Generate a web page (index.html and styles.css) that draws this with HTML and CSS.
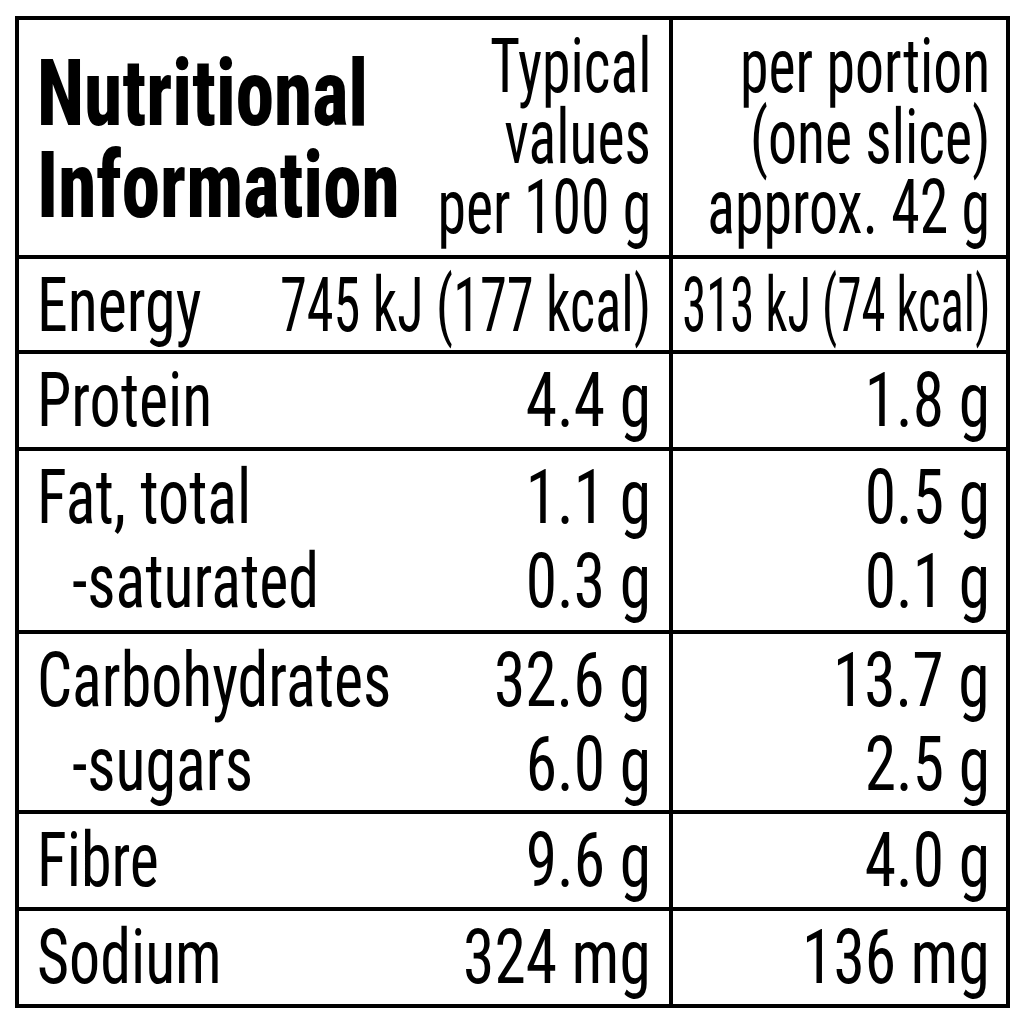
FILE: index.html
```html
<!DOCTYPE html>
<html lang="en">
<head>
<meta charset="utf-8">
<title>Nutritional Information</title>
<link rel="stylesheet" href="styles.css">
</head>
<body>
<div class="panel">
  <div class="row row-head">
    <div class="main">
      <div class="title">
        <div class="ln"><span class="s sl">Nutritional</span></div>
        <div class="ln"><span class="s sl">Information</span></div>
      </div>
      <div class="sub">
        <div class="ln"><span class="s sr">Typical</span></div>
        <div class="ln"><span class="s sr">values</span></div>
        <div class="ln"><span class="s sr">per 100 g</span></div>
      </div>
    </div>
    <div class="per sub">
      <div class="ln"><span class="s sr">per portion</span></div>
      <div class="ln"><span class="s sr">(one slice)</span></div>
      <div class="ln"><span class="s sr">approx. 42 g</span></div>
    </div>
  </div>

  <div class="row row-energy">
    <div class="main body">
      <div class="labels"><div class="ln"><span class="s sl">Energy</span></div></div>
      <div class="vals"><div class="ln"><span class="s sv e1">745 kJ (177 kcal)</span></div></div>
    </div>
    <div class="per body">
      <div class="ln"><span class="s sv e2">313 kJ (74 kcal)</span></div>
    </div>
  </div>

  <div class="row row-one">
    <div class="main body">
      <div class="labels"><div class="ln"><span class="s sl">Protein</span></div></div>
      <div class="vals"><div class="ln"><span class="s sv">4.4 g</span></div></div>
    </div>
    <div class="per body">
      <div class="ln"><span class="s sv">1.8 g</span></div>
    </div>
  </div>

  <div class="row row-fat">
    <div class="main body">
      <div class="labels">
        <div class="ln"><span class="s sl">Fat, total</span></div>
        <div class="ln sub-item"><span class="s sl">-saturated</span></div>
      </div>
      <div class="vals">
        <div class="ln"><span class="s sv">1.1 g</span></div>
        <div class="ln"><span class="s sv">0.3 g</span></div>
      </div>
    </div>
    <div class="per body">
      <div class="ln"><span class="s sv">0.5 g</span></div>
      <div class="ln"><span class="s sv">0.1 g</span></div>
    </div>
  </div>

  <div class="row row-carb">
    <div class="main body">
      <div class="labels">
        <div class="ln"><span class="s sl">Carbohydrates</span></div>
        <div class="ln sub-item"><span class="s sl">-sugars</span></div>
      </div>
      <div class="vals">
        <div class="ln"><span class="s sv">32.6 g</span></div>
        <div class="ln"><span class="s sv">6.0 g</span></div>
      </div>
    </div>
    <div class="per body">
      <div class="ln"><span class="s sv">13.7 g</span></div>
      <div class="ln"><span class="s sv">2.5 g</span></div>
    </div>
  </div>

  <div class="row row-one">
    <div class="main body">
      <div class="labels"><div class="ln"><span class="s sl">Fibre</span></div></div>
      <div class="vals"><div class="ln"><span class="s sv">9.6 g</span></div></div>
    </div>
    <div class="per body">
      <div class="ln"><span class="s sv">4.0 g</span></div>
    </div>
  </div>

  <div class="row row-one">
    <div class="main body">
      <div class="labels"><div class="ln"><span class="s sl">Sodium</span></div></div>
      <div class="vals"><div class="ln"><span class="s sv">324 mg</span></div></div>
    </div>
    <div class="per body">
      <div class="ln"><span class="s sv">136 mg</span></div>
    </div>
  </div>
</div>
</body>
</html>
```
FILE: styles.css
```css
html, body {
  margin: 0;
  padding: 0;
  background: #fff;
}
body {
  font-family: "Roboto Condensed", "Liberation Sans", sans-serif;
  color: #000;
  font-size: 76px;
  font-weight: 450;
  overflow: hidden;
}
.panel {
  width: 995px;
  margin: 16px 0 0 15px;
  border: 4px solid #000;
  box-sizing: border-box;
}
.row {
  display: flex;
  border-top: 4px solid #000;
}
.row:first-child { border-top: 0; }
.row-head { height: 235px; }
.row-energy { height: 91px; }
.row-one { height: 93px; }
.row-fat { height: 179px; }
.row-carb { height: 176px; }

.main {
  width: 650px;
  flex: none;
  box-sizing: border-box;
  padding: 0 18px;
  display: grid;
  grid-template-columns: 1fr;
}
.main > * {
  grid-area: 1 / 1;
}
.per {
  flex: 1;
  min-width: 0;
  border-left: 4px solid #000;
  padding-right: 16px;
  display: flex;
  flex-direction: column;
  align-items: flex-end;
}
.ln {
  white-space: nowrap;
}
.s {
  display: inline-block;
}
.sl {
  transform: scaleX(0.815);
  transform-origin: left center;
}
.sr {
  transform: scaleX(0.76);
  transform-origin: right center;
}
.sv {
  transform: scaleX(0.835);
  transform-origin: right center;
}
.sv.e1 { transform: scaleX(0.715); }
.sv.e2 { transform: scaleX(0.64); }

/* header */
.title {
  justify-self: start;
  font-weight: 800;
  font-size: 93px;
  line-height: 92px;
  padding-top: 28px;
}
.title .sl { transform: scaleX(0.83); }
.sub {
  justify-self: end;
  text-align: right;
  line-height: 70.5px;
  padding-top: 11px;
}
.per.sub { padding-top: 11px; }

/* body rows */
.body {
  line-height: 84px;
  padding-top: 4px;
  box-sizing: border-box;
}
.labels { justify-self: start; }
.vals { justify-self: end; text-align: right; }
.sub-item { padding-left: 35px; }
```
